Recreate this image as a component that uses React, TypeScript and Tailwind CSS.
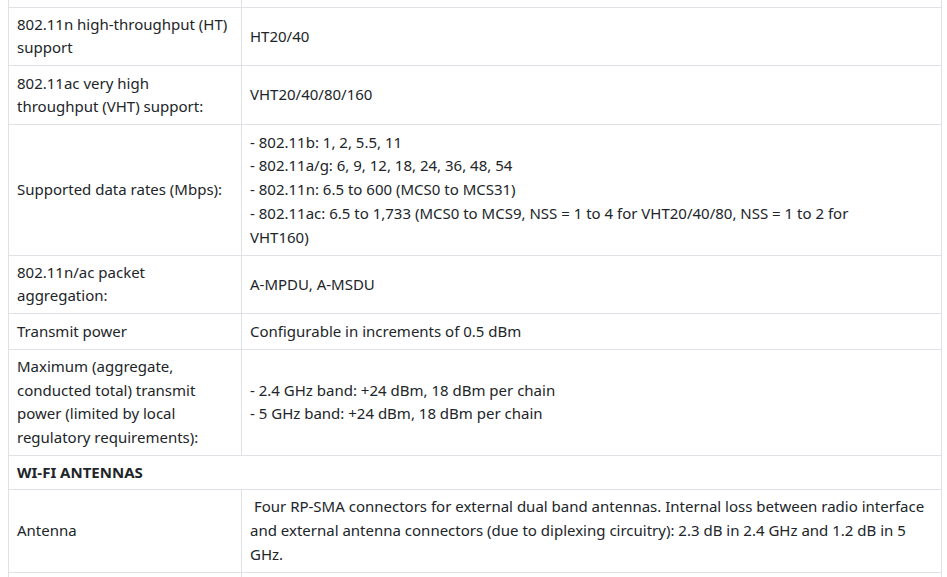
import React from "react";

const cell = "border border-[#dee2e6] px-2 py-[5.2px] align-middle";

function Row({ label, children }: { label: React.ReactNode; children: React.ReactNode }) {
  return (
    <tr>
      <td className={`${cell} w-[233px]`}>{label}</td>
      <td className={cell}>{children}</td>
    </tr>
  );
}

export default function App() {
  return (
    <div className="h-[577px] overflow-hidden bg-white pl-2 font-['Noto_Sans',sans-serif] text-[15px] leading-[23.76px] text-[#212529]">
      <table className="w-[934px] border-collapse">
        <tbody>
          <tr>
            <td className="h-[7px] w-[233px] border-x border-b border-[#dee2e6] p-0"></td>
            <td className="h-[7px] border-x border-b border-[#dee2e6] p-0"></td>
          </tr>
          <Row label={<>802.11n high-throughput (HT)<br />support</>}>HT20/40</Row>
          <Row label={<>802.11ac very high<br />throughput (VHT) support:</>}>VHT20/40/80/160</Row>
          <Row label="Supported data rates (Mbps):">
            - 802.11b: 1, 2, 5.5, 11
            <br />- 802.11a/g: 6, 9, 12, 18, 24, 36, 48, 54
            <br />- 802.11n: 6.5 to 600 (MCS0 to MCS31)
            <br />- 802.11ac: 6.5 to 1,733 (MCS0 to MCS9, NSS = 1 to 4 for VHT20/40/80, NSS = 1 to 2 for
            <br />VHT160)
          </Row>
          <Row label={<>802.11n/ac packet<br />aggregation:</>}>A-MPDU, A-MSDU</Row>
          <Row label="Transmit power">Configurable in increments of 0.5 dBm</Row>
          <Row
            label={
              <>
                Maximum (aggregate,
                <br />
                conducted total) transmit
                <br />
                power (limited by local
                <br />
                regulatory requirements):
              </>
            }
          >
            - 2.4 GHz band: +24 dBm, 18 dBm per chain
            <br />- 5 GHz band: +24 dBm, 18 dBm per chain
          </Row>
          <tr>
            <td colSpan={2} className="border border-[#dee2e6] px-2 py-[5px] align-middle leading-[23px] font-bold">
              WI-FI ANTENNAS
            </td>
          </tr>
          <Row label="Antenna">
            &nbsp;Four RP-SMA connectors for external dual band antennas. Internal loss between radio interface
            <br />
            and external antenna connectors (due to diplexing circuitry): 2.3 dB in 2.4 GHz and 1.2 dB in 5
            <br />
            GHz.
          </Row>
          <Row label="&nbsp;">&nbsp;</Row>
        </tbody>
      </table>
    </div>
  );
}
